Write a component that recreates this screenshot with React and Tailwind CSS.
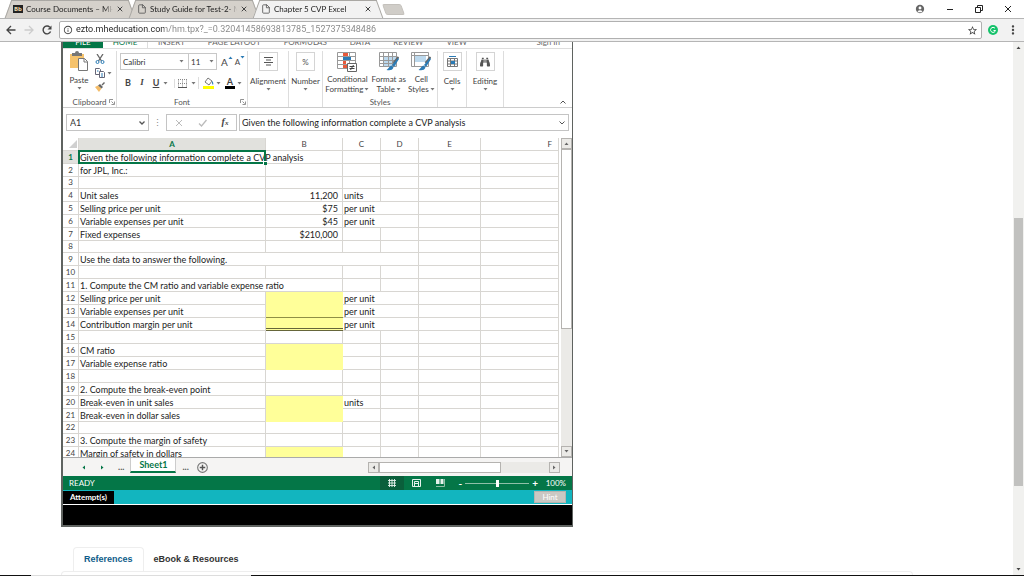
import { useState } from 'react';
import { FiFile, FiX } from 'react-icons/fi';
import { FaBinoculars } from 'react-icons/fa';
import { MdAccountCircle, MdMoreVert, MdStarBorder, MdInfoOutline } from 'react-icons/md';

const browserTabs = [
  { title: 'Course Documents – MH', brand: true },
  { title: 'Study Guide for Test-2- M' },
  { title: 'Chapter 5 CVP Excel', active: true },
];

const ribbonTabs = ['INSERT', 'PAGE LAYOUT', 'FORMULAS', 'DATA', 'REVIEW', 'VIEW'];

// a: label, b: value, c: unit, y: yellow input cell
const rows = [
  { a: 'Given the following information complete a CVP analysis' },
  { a: 'for JPL, Inc.:' },
  {},
  { a: 'Unit sales', b: '11,200', c: 'units' },
  { a: 'Selling price per unit', b: '$75', c: 'per unit', wideC: true },
  { a: 'Variable expenses per unit', b: '$45', c: 'per unit', wideC: true },
  { a: 'Fixed expenses', b: '$210,000' },
  {},
  { a: 'Use the data to answer the following.', span: 4 },
  {},
  { a: '1. Compute the CM ratio and variable expense ratio', span: 2 },
  { a: 'Selling price per unit', c: 'per unit', wideC: true, y: true },
  { a: 'Variable expenses per unit', c: 'per unit', wideC: true, y: true, line: 'single' },
  { a: 'Contribution margin per unit', c: 'per unit', wideC: true, y: true, line: 'double' },
  {},
  { a: 'CM ratio', y: true },
  { a: 'Variable expense ratio', y: true },
  {},
  { a: '2. Compute the break-even point' },
  { a: 'Break-even in unit sales', c: 'units', y: true },
  { a: 'Break-even in dollar sales', y: true },
  {},
  { a: '3. Compute the margin of safety' },
  { a: 'Margin of safety in dollars', y: true },
];

const shortRows = [3, 8, 22];

function Caret({ className = 'text-[#777]' }) {
  return (
    <svg viewBox="0 0 5 3" className={`w-[5px] h-[3px] shrink-0 ${className}`}>
      <path d="M0.5 0h4L2.5 2.5z" fill="currentColor" />
    </svg>
  );
}

function Launcher() {
  return (
    <svg viewBox="0 0 6 6" className="size-[6px]" fill="none" stroke="#777">
      <path d="M.5 4V.5H4M2.5 2.5l2 2M5.5 2.5v3h-3" strokeWidth=".8" />
    </svg>
  );
}

function BrowserTab({ title, brand, active }) {
  const sides = active
    ? 'before:bg-[#f2f2f2] after:bg-[#f2f2f2] z-10'
    : 'before:bg-[#d5d1cb] after:bg-[#d5d1cb]';
  return (
    <div
      className={`relative isolate flex items-center w-[124px] h-[18px] pl-[5px] pr-2 gap-[3px] before:absolute before:inset-y-0 before:left-0 before:w-2/3 before:-z-10 before:-skew-x-[20deg] before:border-l before:border-t before:border-[#a9a7a3] after:absolute after:inset-y-0 after:right-0 after:w-2/3 after:-z-10 after:skew-x-[20deg] after:border-r after:border-t after:border-[#a9a7a3] ${sides}`}
    >
      {brand ? (
        <span className="flex items-center justify-center w-[10px] h-[8px] shrink-0 bg-[#222] text-[6px] leading-none font-bold text-[#f4dfb0]">Bb</span>
      ) : (
        <FiFile className="size-[10px] shrink-0 text-[#555]" />
      )}
      <span className="flex-1 min-w-0 overflow-hidden whitespace-nowrap font-[Lato,sans-serif] text-[8px] text-[#222] mask-r-from-90%">{title}</span>
      <button aria-label={`Close ${title}`} className="text-[#444]">
        <FiX className="size-[8px]" strokeWidth={3} />
      </button>
    </div>
  );
}

function BrowserChrome() {
  return (
    <header className="shrink-0 border-b border-[#b5b5b5]">
      <div className="flex items-center h-[18px] pl-2 bg-white">
        {browserTabs.map((tab) => (
          <BrowserTab key={tab.title} {...tab} />
        ))}
        <button aria-label="New tab" className="ml-1 w-[19px] h-[11px] skew-x-[20deg] rounded-xs bg-[#d0cdc8] border border-[#c4c1bc]" />
        <div className="ml-auto flex items-center gap-[21px] pr-3 text-[#222]">
          <MdAccountCircle className="size-[10px] text-[#666]" />
          <button aria-label="Minimize">
            <svg viewBox="0 0 8 8" className="size-2" stroke="currentColor"><path d="M1 4.5h6" /></svg>
          </button>
          <button aria-label="Restore">
            <svg viewBox="0 0 8 8" className="size-2" fill="none" stroke="currentColor"><path d="M.5 2.5h5v5h-5zM2.5 2.5v-2h5v5h-2" /></svg>
          </button>
          <button aria-label="Close">
            <svg viewBox="0 0 8 8" className="size-2" stroke="currentColor"><path d="M1 1l6 6M7 1L1 7" /></svg>
          </button>
        </div>
      </div>
      <div className="flex items-center h-[23px] pl-1.5 pr-1 bg-[#f2f2f2] border-t border-[#b5b5b5]">
        <button aria-label="Back" className="w-[18px] text-[#444]">
          <svg viewBox="0 0 10 10" className="size-[10px]" fill="none" stroke="currentColor" strokeWidth="1.3"><path d="M9.500 5H1.500M5 1L1 5l4 4" /></svg>
        </button>
        <button aria-label="Forward" className="w-[18px] text-[#ccc]">
          <svg viewBox="0 0 10 10" className="size-[10px]" fill="none" stroke="currentColor" strokeWidth="1.3"><path d="M.5 5h8M5 1l4 4-4 4" /></svg>
        </button>
        <button aria-label="Reload" className="w-[17px] text-[#444]">
          <svg viewBox="0 0 10 10" className="size-[10px]" fill="none" stroke="currentColor" strokeWidth="1.4"><path d="M8.600 6.500A3.900 3.900 0 1 1 7.800 2.200" /><path d="M9.500.5v4h-4z" fill="currentColor" stroke="none" /></svg>
        </button>
        <label className="flex flex-1 items-center gap-[3px] h-[18px] px-[3px] bg-white border border-[#b0b0b0] rounded-xs">
          <MdInfoOutline className="size-[10px] text-[#444]" />
          <input
            aria-label="Address"
            defaultValue="ezto.mheducation.com/hm.tpx?_=0.32041458693813785_1527375348486"
            className="flex-1 min-w-0 font-[Roboto,sans-serif] text-[9px] outline-none text-transparent bg-clip-text bg-[linear-gradient(to_right,#222_88px,#858585_88px)]"
          />
          <MdStarBorder className="size-[11px] text-[#444]" />
        </label>
        <button aria-label="Grammarly" className="ml-1.5 flex items-center justify-center size-[10px] rounded-full bg-[#15c26b]">
          <svg viewBox="0 0 8 8" className="size-2" fill="none" stroke="#fff"><path d="M6 2.300A2.500 2.500 0 1 0 6.500 4.500H4.500" /></svg>
        </button>
        <button aria-label="Menu" className="ml-2 text-[#444]">
          <MdMoreVert className="size-[14px]" />
        </button>
      </div>
    </header>
  );
}

function RibbonTabs() {
  return (
    <div className="flex items-end h-[7px] overflow-hidden text-[8px] leading-3 text-[#666] border-b border-[#ddd]">
      <button className="w-10 bg-[#047647] text-white text-center shrink-0">FILE</button>
      <button className="w-[45px] text-[#047647] border-r border-[#ddd] shrink-0">HOME</button>
      <div className="flex flex-1 gap-[23px] pl-2.5">
        {ribbonTabs.map((tab) => (
          <button key={tab} className="whitespace-nowrap">{tab}</button>
        ))}
      </div>
      <a href="#signin" className="pr-3">Sign In</a>
    </div>
  );
}

function Group({ label, className, children, launcher }) {
  return (
    <div className={`flex flex-col h-[56px] border-r border-[#ddd] ${className}`}>
      <div className="flex-1 min-h-0">{children}</div>
      <div className={`flex items-center h-[10px] text-[8px] leading-[10px] text-[#555] ${launcher ? 'justify-between' : 'justify-center'}`}>
        {launcher && <span className="w-[7px]" />}
        {label}
        {launcher && (
          <button aria-label={`${label} settings`} className="w-[7px]">
            <Launcher />
          </button>
        )}
      </div>
    </div>
  );
}

function BoxButton({ label, icon, className }) {
  return (
    <button className={`flex flex-col items-center h-[56px] border-r border-[#ddd] text-[8px] leading-[10px] text-[#444] ${className}`}>
      <span className="flex items-center justify-center size-[19px] mb-[5px] border border-[#d4d4d4] text-[#555]">{icon}</span>
      {label}
      <Caret className="mt-0.5 text-[#777]" />
    </button>
  );
}

function StyleButton({ lines, icon }) {
  return (
    <button className="flex flex-col items-center text-[8px] leading-[10px] text-[#444] whitespace-nowrap">
      <span className="flex items-center h-[21px] mb-0.5">{icon}</span>
      <span>{lines[0]}</span>
      <span className="flex items-center gap-px">
        {lines[1]}
        <Caret />
      </span>
    </button>
  );
}

function Brush() {
  return <path d="M19 6l-6 7 2 2 5-8zM12.500 13.500l2 2c-1 3-4 3-7 2.500 2-1 2-3 5-4.500z" fill="#2b7bb5" />;
}

function Ribbon() {
  return (
    <div className="flex h-[59px] pt-0.5 border-b border-[#ccc] text-[#444]">
      <Group label="Clipboard" launcher className="w-[54px]">
        <div className="flex pl-1.5 gap-1.5">
          <button className="flex flex-col items-center text-[8px] leading-[10px]">
            <svg viewBox="0 0 20 20" className="size-5 mb-1">
              <path d="M1 3h14v14H1z" fill="#f6c36d" />
              <path d="M3 2h3a2 2 0 0 1 4 0h3v3H3z" fill="#777" />
              <path d="M9.500 7.500h6l3 3v9h-9z" fill="#fff" stroke="#777" />
              <path d="M15 7.500v3.500h3.500" fill="none" stroke="#777" />
            </svg>
            Paste
            <Caret className="mt-0.5 text-[#777]" />
          </button>
          <div className="flex flex-col gap-1 pt-[3px]">
            <button aria-label="Cut">
              <svg viewBox="0 0 10 10" className="size-[10px]" fill="none"><path d="M2 0l4.500 7M8 0L3.500 7" stroke="#666" strokeWidth="1.300" /><circle cx="2.500" cy="8" r="1.500" stroke="#2b7bb5" /><circle cx="7.500" cy="8" r="1.500" stroke="#2b7bb5" /></svg>
            </button>
            <button aria-label="Copy" className="flex items-center gap-0.5">
              <svg viewBox="0 0 10 10" className="size-[10px]" fill="#fff" stroke="#667"><path d="M.5.5h4l1 1v5h-5z" /><path d="M4.500 3.500h4l1 1v5h-5z" /><path d="M6 6h2M6 8h2M2 3h1.500" stroke="#2b7bb5" /></svg>
              <Caret />
            </button>
            <button aria-label="Format painter">
              <svg viewBox="0 0 10 10" className="size-[10px]"><path d="M0 5l3-1.500 3.500 3L4 10z" fill="#f4bc68" /><path d="M3 3.500L5 2l3 3-1.500 1.500zM6.500 2.500L9 0l1 1-2.500 2.500z" fill="#666" /></svg>
            </button>
          </div>
        </div>
      </Group>

      <Group label="Font" launcher className="w-[131px]">
        <div className="flex items-center pl-[3px] pt-0.5">
          <label className="relative flex items-center w-[69px] h-[17px] border border-[#c8c8c8]">
            <select aria-label="Font name" className="w-full h-full pl-0.5 text-[8px] text-[#333] appearance-none outline-none">
              <option>Calibri</option>
            </select>
            <Caret className="absolute right-1 text-[#777]" />
          </label>
          <label className="relative flex items-center w-[28px] h-[17px] border border-l-0 border-[#c8c8c8]">
            <select aria-label="Font size" className="w-full h-full pl-0.5 text-[8px] text-[#333] appearance-none outline-none">
              <option>11</option>
            </select>
            <Caret className="absolute right-0.5 text-[#777]" />
          </label>
          <button aria-label="Increase font size" className="flex items-center ml-1 text-[10px] leading-3">A<Caret className="mb-2 rotate-180 text-[#2b7bb5]" /></button>
          <button aria-label="Decrease font size" className="flex items-center ml-0.5 text-[8px] leading-3">A<Caret className="mb-2 text-[#2b7bb5]" /></button>
        </div>
        <div className="flex items-center h-[26px] pl-1 text-[9px] text-[#444]">
          <button className="w-[14px] font-bold">B</button>
          <button className="w-[14px] font-bold italic font-['Liberation_Serif',serif]">I</button>
          <button className="w-[14px] font-bold underline">U</button>
          <Caret />
          <button aria-label="Borders" className="flex items-center gap-1 ml-1.5 pl-[3px] border-l border-[#ddd]">
            <svg viewBox="0 0 9 9" className="size-[9px]" fill="none" stroke="#888" strokeDasharray="1 1"><path d="M.5.500v8M4.500.500v8M8.500.500v8M0 .500h9M0 4.500h9" /><path d="M0 8.500h9" strokeDasharray="none" stroke="#555" /></svg>
            <Caret />
          </button>
          <button aria-label="Fill color" className="flex items-center gap-0.5 ml-0.5 pl-1 border-l border-[#ddd]">
            <svg viewBox="0 0 11 12" className="w-[11px] h-3"><path d="M2 5l3-4 4 3-3 4z" fill="#fff" stroke="#777" /><path d="M9 4c1.500 1 1.500 3 1 4-1-1-1-2-1-4z" fill="#2b7bb5" /><path d="M0 9h11v3H0z" fill="#ff0" /></svg>
            <Caret />
          </button>
          <button aria-label="Font color" className="flex items-center gap-0.5 ml-1">
            <span className="w-[10px] text-[9px] leading-[9px] font-bold text-center border-b-[3px] border-black">A</span>
            <Caret />
          </button>
        </div>
      </Group>

      <BoxButton
        label="Alignment"
        className="w-[41px] pt-px"
        icon={<svg viewBox="0 0 9 9" className="size-[9px]" stroke="#555"><path d="M0 .5h9M2 3h5M0 5.500h9M2 8h5" /></svg>}
      />
      <BoxButton label="Number" className="w-[34px] pt-px" icon="%" />

      <Group label="Styles" className="w-[115px]">
        <div className="flex justify-center gap-0.5">
          <StyleButton
            lines={['Conditional', 'Formatting']}
            icon={
              <svg viewBox="0 0 20 20" className="size-5" fill="#fff" stroke="#999">
                <path d="M.5.500h18v16H.5zM6.500.500v16M12.500.500v16M.5 4.500h18M.5 8.500h18M.5 12.500h18" />
                <path d="M6 1h5v3H6zM6 9h3v3H6zM6 13h5v3H6z" fill="#e8593b" stroke="none" />
                <path d="M6 5h8v3H6z" fill="#2b7bb5" stroke="none" />
                <path d="M10.500 11.500h9v8h-9z" stroke="#666" />
                <path d="M12.500 14.500h5M12.500 16.500h5M16.500 13l-3 5" stroke="#444" />
              </svg>
            }
          />
          <StyleButton
            lines={['Format as', 'Table']}
            icon={
              <svg viewBox="0 0 20 20" className="size-5" fill="#fff">
                <path d="M.5.500h17v14H.5z" stroke="#999" />
                <path d="M5 4h12v10H5z" fill="#bcd9ee" />
                <path d="M4.500.500v14M9.500.500v14M13.500.500v14M.5 4.500h17M.5 8.500h17M.5 11.500h17" stroke="#999" />
                <path d="M19.500 5l-5 6" stroke="#666" strokeWidth="2" />
                <Brush />
              </svg>
            }
          />
          <StyleButton
            lines={['Cell', 'Styles']}
            icon={
              <svg viewBox="0 0 20 20" className="size-5" fill="#fff">
                <path d="M.5.500h17v14H.5zM.5 3.500h17M3.500.500v14" stroke="#999" />
                <path d="M4 4h11v6H4z" fill="#bcd9ee" />
                <path d="M19.500 5l-5 6" stroke="#666" strokeWidth="2" />
                <Brush />
              </svg>
            }
          />
        </div>
      </Group>

      <BoxButton
        label="Cells"
        className="w-[29px] pt-px"
        icon={<svg viewBox="0 0 11 11" className="size-[11px]" fill="#fff" stroke="#777"><path d="M.5 2.500h10v8H.5zM3.500 2.500v8M7.500 2.500v8M.5 5h10M.5 8h10" /><path d="M4 5h4v3H4z" fill="#2b7bb5" stroke="none" /><path d="M2 .5h7" stroke="#2b7bb5" /></svg>}
      />
      <BoxButton label="Editing" className="w-[37px] pt-px" icon={<FaBinoculars className="size-[10px]" />} />
      <button aria-label="Collapse ribbon" className="ml-auto mt-auto pr-1.5 pb-[3px]">
        <svg viewBox="0 0 6 4" className="w-[6px] h-1" fill="none" stroke="#555"><path d="M.5 3.500L3 1l2.500 2.500" /></svg>
      </button>
    </div>
  );
}

function FormulaBar() {
  return (
    <div className="flex items-start h-[30px] px-[3px] pt-1.5 text-[#444]">
      <label className="relative flex items-center w-[83px] h-[17px] border border-[#c4c4c4]">
        <select aria-label="Name box" className="w-full h-full pl-[3px] text-[9px] text-[#333] appearance-none outline-none">
          <option>A1</option>
        </select>
        <svg viewBox="0 0 6 4" className="absolute right-[3px] w-[6px] h-1" fill="none" stroke="#555" strokeWidth="1.300"><path d="M.5.500L3 3 5.500.500" /></svg>
      </label>
      <span className="w-[17px] text-center text-[9px] leading-[17px] text-[#888]">⋮</span>
      <div className="flex items-center justify-around w-[71px] h-[17px] border border-[#c4c4c4]">
        <button aria-label="Cancel">
          <svg viewBox="0 0 8 8" className="size-2" stroke="#bbb"><path d="M1 1l6 6M7 1L1 7" /></svg>
        </button>
        <button aria-label="Enter">
          <svg viewBox="0 0 9 8" className="w-[9px] h-2" fill="none" stroke="#bbb" strokeWidth="1.300"><path d="M1 4.500L3.500 7 8.500 1" /></svg>
        </button>
        <button aria-label="Insert function" className="font-['Liberation_Serif',serif] italic font-bold text-[10px] leading-3">
          f<span className="text-[7px]">x</span>
        </button>
      </div>
      <label className="relative flex flex-1 items-center h-[17px] ml-0.5 border border-[#c4c4c4]">
        <input
          aria-label="Formula"
          defaultValue="Given the following information complete a CVP analysis"
          className="w-full h-full pl-0.5 text-[9px] text-[#222] outline-none"
        />
        <svg viewBox="0 0 6 4" className="absolute right-[3px] w-[6px] h-1" fill="none" stroke="#555"><path d="M.5.500L3 3 5.500.500" /></svg>
      </label>
    </div>
  );
}

const cell = 'p-0 border-b border-r border-[#d8d6d2] whitespace-nowrap';

function SheetRow({ row, n }) {
  const span = row.span || 1;
  const lines = {
    single: 'border-b border-[#8f8f45]',
    double: 'border-b-[3px] border-double border-[#66663a]',
  };
  return (
    <tr className={shortRows.includes(n) ? 'h-3' : 'h-[13px]'}>
      <th className={`${cell} text-[8px] ${n === 1 ? 'bg-[#e1e1dd] text-[#047647] font-bold' : 'font-normal text-[#444]'}`}>{n}</th>
      <td colSpan={span} className={`${cell} pl-px ${n === 1 ? 'relative' : ''}`}>
        {row.a}
        {n === 1 && (
          <div className="absolute -inset-px border-2 border-[#047647]">
            <span className="absolute -right-[3px] -bottom-[3px] size-1 bg-[#047647] border-l border-t border-white" />
          </div>
        )}
      </td>
      {span < 2 && (
        <td className={row.y ? `p-0 bg-[#ffff99] ${lines[row.line] || ''}` : `${cell} pr-1 text-right`}>{row.b}</td>
      )}
      {span < 3 && <td colSpan={row.wideC ? 2 : 1} className={`${cell} pl-px`}>{row.c}</td>}
      {span < 4 && !row.wideC && <td className={cell} />}
      <td className={cell} />
      <td className={cell} />
    </tr>
  );
}

const scrollButton = 'flex items-center justify-center size-[11px] shrink-0 bg-[#ebeae7] border border-[#b5b3b0]';

function Sheet() {
  return (
    <div className="flex h-[320px] overflow-hidden border-b border-[#aaa]">
      <div className="flex-1 min-w-0">
        <table className="w-full table-fixed border-separate border-spacing-0 text-[9px] leading-[11px] text-[#222]">
          <colgroup>
            <col className="w-4" />
            <col />
            <col className="w-[77px]" />
            <col className="w-[38px]" />
            <col className="w-[38px]" />
            <col className="w-[62px]" />
            <col className="w-[78px]" />
          </colgroup>
          <thead>
            <tr className="h-[13px] text-[8px] text-[#444]">
              <th className={cell}>
                <svg viewBox="0 0 8 8" className="size-2 ml-auto mr-px"><path d="M8 0v8H0z" fill="#d0d0d0" /></svg>
              </th>
              {['A', 'B', 'C', 'D', 'E'].map((c) => (
                <th key={c} className={`${cell} ${c === 'A' ? 'bg-[#e1e1dd] text-[#047647] font-bold' : 'font-normal'}`}>{c}</th>
              ))}
              <th className={`${cell} font-normal text-right pr-1.5`}>F</th>
            </tr>
          </thead>
          <tbody>
            {rows.map((row, i) => (
              <SheetRow key={i} row={row} n={i + 1} />
            ))}
          </tbody>
        </table>
      </div>
      <div className="flex flex-col ml-0.5 bg-[#ebeae7]">
        <button aria-label="Scroll up" className={scrollButton}><Caret className="rotate-180 text-[#666]" /></button>
        <div className="h-[180px] bg-white border border-[#b5b3b0]" />
        <button aria-label="Scroll down" className={`mt-auto ${scrollButton}`}><Caret className="text-[#666]" /></button>
      </div>
    </div>
  );
}

function SheetTabs() {
  return (
    <div className="flex items-center h-[18px] bg-[#f5f4f3] text-[#047647]">
      <button aria-label="Previous sheet" className="ml-[18px]"><Caret className="rotate-90 text-[#047647]" /></button>
      <button aria-label="Next sheet" className="ml-3.5"><Caret className="-rotate-90 text-[#047647]" /></button>
      <span className="ml-[13px] text-[9px] font-bold text-[#555]">...</span>
      <button className="self-start w-[46px] h-[15px] ml-1.5 bg-white border-x border-[#ccc] border-b-2 border-b-[#047647] text-[9px] leading-[14px] font-bold">Sheet1</button>
      <span className="ml-1.5 text-[9px] font-bold text-[#555]">...</span>
      <button aria-label="New sheet" className="ml-2">
        <svg viewBox="0 0 10 10" className="size-[11px]" fill="none" stroke="#777"><circle cx="5" cy="5" r="4.400" /><path d="M5 2.500v5M2.500 5h5" stroke="#555" strokeWidth="1.300" /></svg>
      </button>
      <div className="flex w-[192px] h-[11px] ml-auto mr-3 bg-[#ebeae7]">
        <button aria-label="Scroll left" className={scrollButton}><Caret className="rotate-90 text-[#666]" /></button>
        <div className="w-[122px] bg-white border border-[#b5b3b0]" />
        <button aria-label="Scroll right" className={`ml-auto ${scrollButton}`}><Caret className="-rotate-90 text-[#666]" /></button>
      </div>
    </div>
  );
}

function StatusBar() {
  const [zoom, setZoom] = useState(100);
  return (
    <div className="flex items-center h-[14px] px-1.5 bg-[#047647] text-white text-[8px] leading-[14px]">
      <span>READY</span>
      <button aria-label="Normal view" className="ml-auto flex items-center justify-center w-6 h-[14px] bg-[#0a5f3b]">
        <svg viewBox="0 0 8 8" className="size-2" fill="none" stroke="#e6f2ec"><path d="M1.500 0v8M4 0v8M6.500 0v8M0 1.500h8M0 4h8M0 6.500h8" strokeWidth=".9" /></svg>
      </button>
      <button aria-label="Page layout view" className="flex items-center justify-center w-6 h-[14px]">
        <svg viewBox="0 0 9 8" className="w-[9px] h-2" fill="none" stroke="#e6f2ec"><path d="M.5.500h8v7h-8zM2.500 2.500h4v5M2.500 7.500v-5M3 4.500h3" /></svg>
      </button>
      <button aria-label="Page break view" className="flex items-center justify-center w-6 h-[14px]">
        <svg viewBox="0 0 9 8" className="w-[9px] h-2" fill="#e6f2ec"><path d="M0 0h3.500v5H0zM4.500 0h3v5h-3z" /><path d="M8.500 0v7.500H0" fill="none" stroke="#8fc0a8" /></svg>
      </button>
      <button aria-label="Zoom out" className="ml-1.5 text-[10px] leading-3 font-bold">-</button>
      <input
        type="range"
        aria-label="Zoom"
        min="0"
        max="200"
        value={zoom}
        onChange={(e) => setZoom(e.target.value)}
        className="w-16 h-px mx-[3px] appearance-none bg-[#8fc0a8] [&::-webkit-slider-thumb]:appearance-none [&::-webkit-slider-thumb]:w-[3px] [&::-webkit-slider-thumb]:h-[7px] [&::-webkit-slider-thumb]:bg-white"
      />
      <button aria-label="Zoom in" className="text-[10px] leading-3 font-bold">+</button>
      <span className="w-7 text-right">{zoom}%</span>
    </div>
  );
}

function Excel() {
  return (
    <section className="w-full max-w-[512px] border-l-2 border-r border-b-2 border-[#5f6360] bg-white font-[Lato,sans-serif]">
      <RibbonTabs />
      <Ribbon />
      <FormulaBar />
      <Sheet />
      <SheetTabs />
      <StatusBar />
      <div className="flex items-center justify-between h-[15px] pr-1.5 bg-[#12b5bf] border-b border-white">
        <span className="h-[13px] px-[7px] bg-black text-white text-[8px] leading-[13px] font-bold">Attempt(s)</span>
        <button className="w-8 h-3 bg-[#cbc8c3] border border-[#b8b5b0] text-white text-[8px] leading-[10px]">Hint</button>
      </div>
      <div className="h-5 bg-black" />
    </section>
  );
}

export default function App() {
  return (
    <div className="flex flex-col h-screen overflow-hidden bg-white font-['Open_Sans',sans-serif]">
      <BrowserChrome />
      <div className="flex flex-1 min-h-0">
        <main className="flex-1 min-w-0 flex flex-col overflow-hidden pl-[61px] pr-[100px]">
          <Excel />
          <nav className="flex mt-5 pl-3 font-['Liberation_Sans',sans-serif] text-[9px] font-bold">
            <a href="#references" className="px-2.5 h-6 leading-[22px] border border-b-0 border-[#eee] rounded-t-sm text-[#0f5c8a]">References</a>
            <a href="#ebook" className="px-2.5 h-6 leading-6 text-[#333]">eBook &amp; Resources</a>
          </nav>
          <div className="flex-1 border border-b-0 border-[#eee] rounded-t-sm" />
        </main>
        <div className="flex flex-col items-center justify-between w-[11px] py-1 bg-[#f1f1ef]">
          <Caret className="rotate-180 text-[#444]" />
          <div className="w-[9px] h-[268px] mt-[169px] mb-auto bg-[#c1c1bf]" />
          <Caret className="text-[#444]" />
        </div>
      </div>
      <footer className="flex h-px shrink-0 bg-[#111]">
        <div className="ml-[31px] w-[220px] bg-[#ddd]" />
      </footer>
    </div>
  );
}
